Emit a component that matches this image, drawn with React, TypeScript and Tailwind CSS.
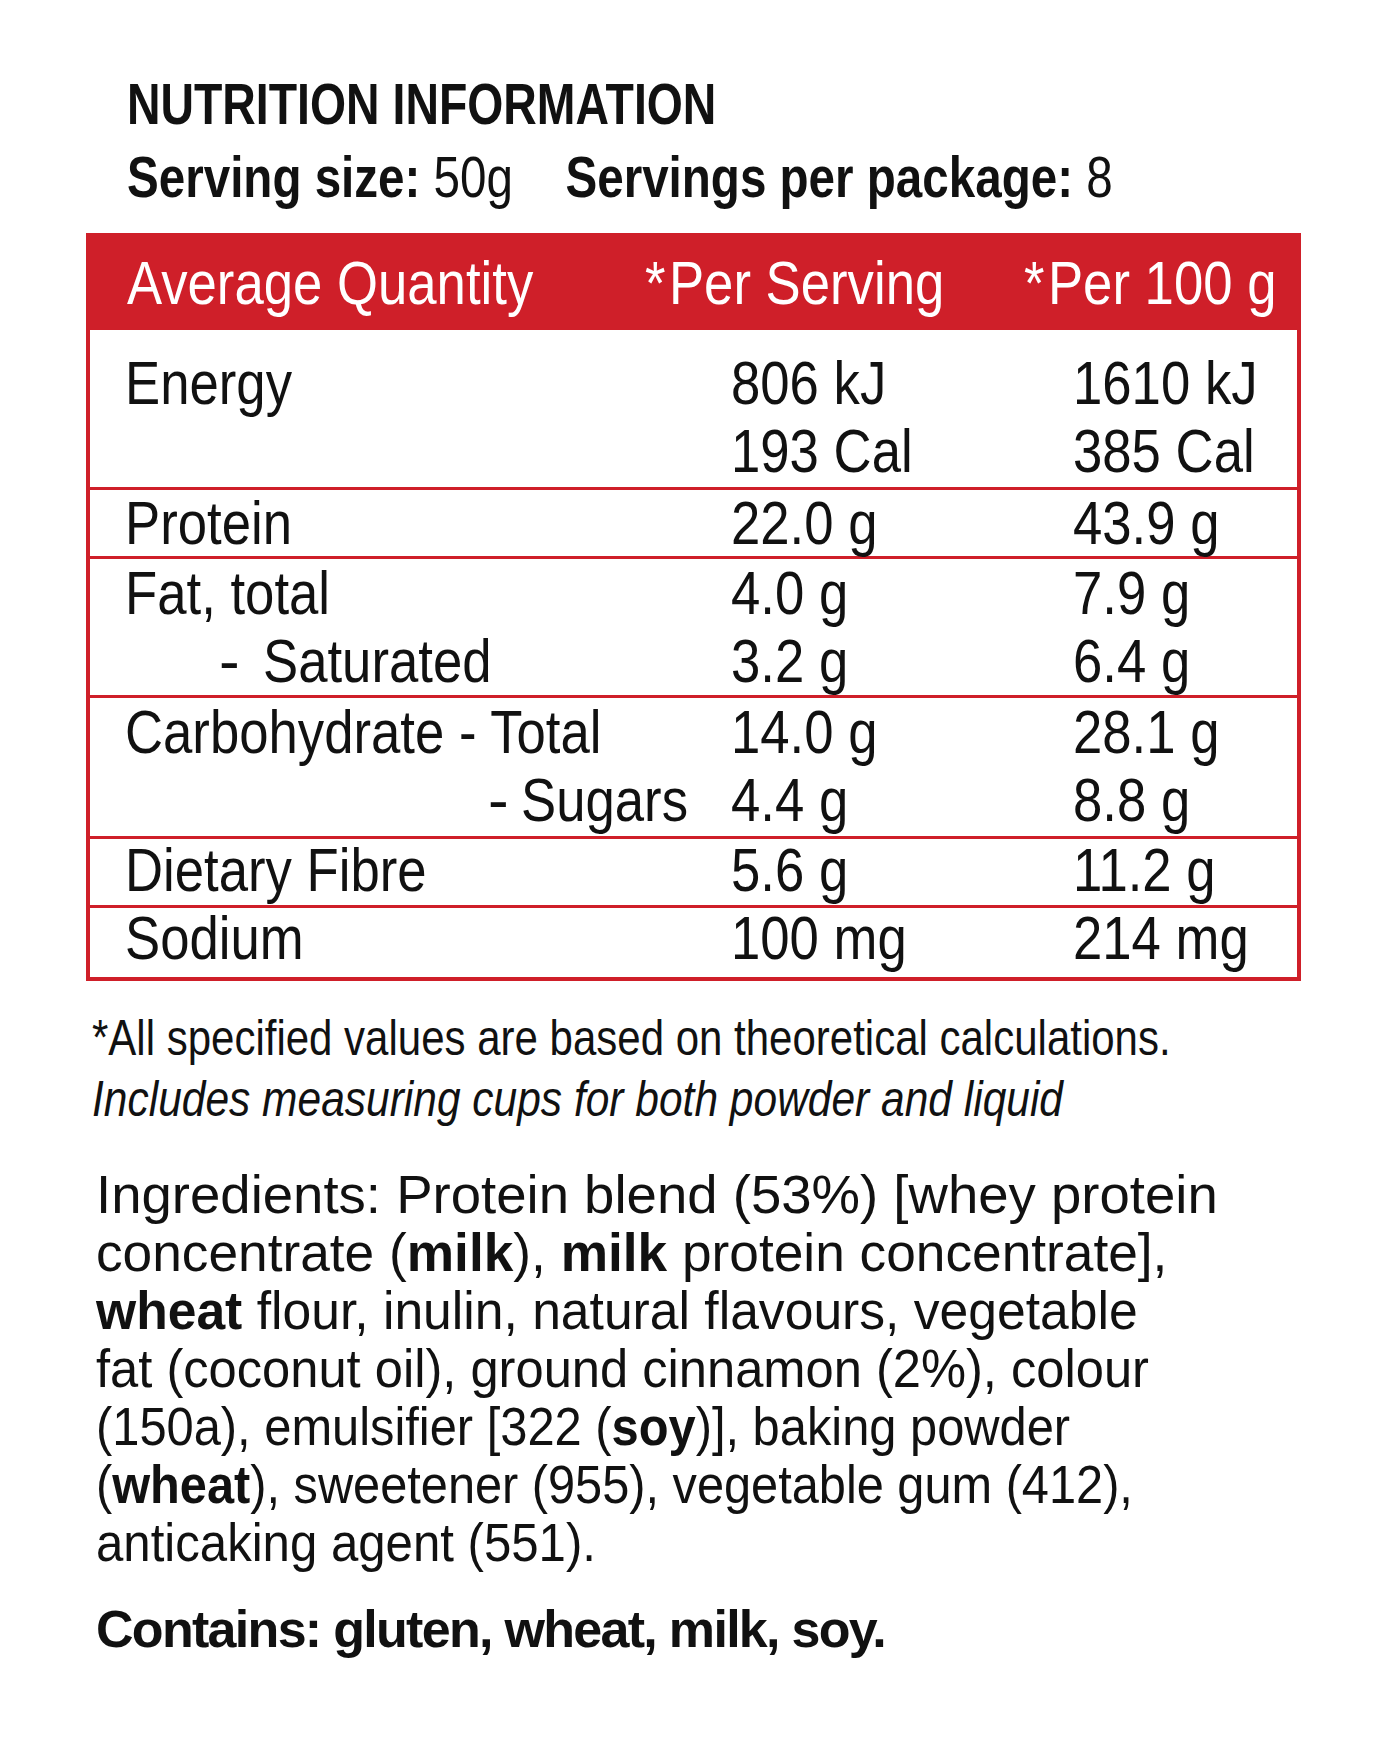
import React from "react";

const RED = "border-[#cf1f29]";

function S({ children, className = "" }: { children: React.ReactNode; className?: string }) {
  return <span className={`inline-block origin-left scale-x-[0.85] ${className}`}>{children}</span>;
}

function Line({
  a,
  b,
  c,
  lh,
}: {
  a: React.ReactNode;
  b: string;
  c: string;
  lh: string;
}) {
  return (
    <div className={`grid grid-cols-[641px_342px_1fr] whitespace-nowrap ${lh}`}>
      <div className="pl-[35px]">{typeof a === "string" ? <S>{a}</S> : a}</div>
      <div>
        <S>{b}</S>
      </div>
      <div>
        <S>{c}</S>
      </div>
    </div>
  );
}

function Row({ className, children }: { className: string; children: React.ReactNode }) {
  return <div className={`border-t-[3px] ${RED} ${className}`}>{children}</div>;
}

export default function App() {
  return (
    <div className="w-[1383px] h-[1754px] bg-white text-[#111] overflow-hidden font-['Liberation_Sans',Arial,sans-serif]">
      <div className="pl-[127px] pt-[72px] whitespace-nowrap">
        <h1 className="text-[58px] leading-[64px] font-bold">
          <span className="inline-block origin-left scale-x-[0.8]">NUTRITION INFORMATION</span>
        </h1>
        <div className="mt-[9px] text-[58px] leading-[64px]">
          <span className="inline-block origin-left scale-x-[0.82]">
            <span className="font-bold">Serving size:</span> 50g
            <span className="font-bold ml-[64px]">Servings per package:</span> 8
          </span>
        </div>
      </div>

      <div className={`ml-[86px] mt-[24px] w-[1215px] border-4 ${RED} text-[62px]`}>
        <div className="bg-[#cf1f29] text-white pt-[12px] pb-[14px] leading-[67px] grid grid-cols-[555px_379px_1fr] whitespace-nowrap">
          <div className="pl-[37px]">
            <S>Average Quantity</S>
          </div>
          <div>
            <S>
              *<span className="ml-[4px]">Per Serving</span>
            </S>
          </div>
          <div>
            <S>
              *<span className="ml-[4px]">Per 100 g</span>
            </S>
          </div>
        </div>

        <div className="pt-[19px] pb-[2px]">
          <Line a="Energy" b="806 kJ" c="1610 kJ" lh="leading-[68px]" />
          <Line a="" b="193 Cal" c="385 Cal" lh="leading-[68px]" />
        </div>

        <Row className="">
          <Line a="Protein" b="22.0 g" c="43.9 g" lh="leading-[66px]" />
        </Row>

        <Row className="">
          <Line a="Fat, total" b="4.0 g" c="7.9 g" lh="leading-[68px]" />
          <Line
            a={
              <>
                <span className="ml-[94px]">-</span>
                <S className="ml-[23px]">Saturated</S>
              </>
            }
            b="3.2 g"
            c="6.4 g"
            lh="leading-[68px]"
          />
        </Row>

        <Row className="pb-[2px]">
          <Line a="Carbohydrate - Total" b="14.0 g" c="28.1 g" lh="leading-[68px]" />
          <Line
            a={
              <>
                <span className="ml-[363px]">-</span>
                <S className="ml-[12px]">Sugars</S>
              </>
            }
            b="4.4 g"
            c="8.8 g"
            lh="leading-[68px]"
          />
        </Row>

        <Row className="pb-[4px]">
          <Line a="Dietary Fibre" b="5.6 g" c="11.2 g" lh="leading-[62px]" />
        </Row>

        <Row className="pb-[9px]">
          <Line a="Sodium" b="100 mg" c="214 mg" lh="leading-[60px]" />
        </Row>
      </div>

      <div className="ml-[92px] mt-[27px] text-[50px] leading-[61px] whitespace-nowrap">
        <p>
          <span className="inline-block origin-left scale-x-[0.84]">
            *All specified values are based on theoretical calculations.
          </span>
        </p>
        <p className="italic">
          <span className="inline-block origin-left scale-x-[0.85]">
            Includes measuring cups for both powder and liquid
          </span>
        </p>
      </div>

      <div className="ml-[96px] mt-[35px] text-[54px] leading-[58px] whitespace-nowrap">
        <p>
          <span className="inline-block origin-left scale-x-[1.01]">
            Ingredients: Protein blend (53%) [whey protein
          </span>
        </p>
        <p>
          <span className="inline-block origin-left scale-x-[0.986]">
            concentrate (<b>milk</b>), <b>milk</b> protein concentrate],
          </span>
        </p>
        <p>
          <span className="inline-block origin-left scale-x-[0.956]">
            <b>wheat</b> flour, inulin, natural flavours, vegetable
          </span>
        </p>
        <p>
          <span className="inline-block origin-left scale-x-[0.938]">
            fat (coconut oil), ground cinnamon (2%), colour
          </span>
        </p>
        <p>
          <span className="inline-block origin-left scale-x-[0.904]">
            (150a), emulsifier [322 (<b>soy</b>)], baking powder
          </span>
        </p>
        <p>
          <span className="inline-block origin-left scale-x-[0.902]">
            (<b>wheat</b>), sweetener (955), vegetable gum (412),
          </span>
        </p>
        <p>
          <span className="inline-block origin-left scale-x-[0.91]">anticaking agent (551).</span>
        </p>
        <p className="mt-[29px] text-[52px] font-bold tracking-[-1.7px]">
          Contains: gluten, wheat, milk, soy.
        </p>
      </div>
    </div>
  );
}
